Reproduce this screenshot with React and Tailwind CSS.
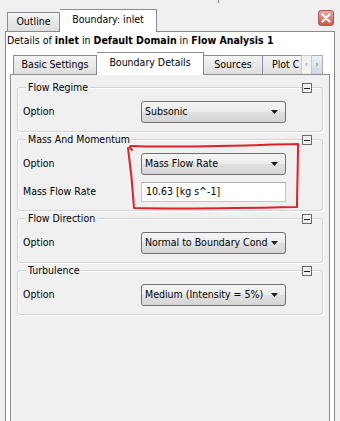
import React from 'react';

function Combo({ value }) {
  return (
    <div className="flex items-center h-[22px] w-[145px] rounded-[3px] border border-[#707070] bg-[linear-gradient(to_bottom,#f4f4f4_0%,#ececec_50%,#e0e0e0_50%,#d6d6d6_100%)] pl-[3px] pr-[7px]">
      <span className="flex-1 whitespace-nowrap overflow-hidden">{value}</span>
      <svg width="7" height="4" viewBox="0 0 7 4" className="ml-[3px] shrink-0">
        <path d="M0 0h7L3.5 4z" fill="#1a1a1a" />
      </svg>
    </div>
  );
}

function Group({ title, children, first }) {
  return (
    <div className={`relative ${first ? 'mt-[12px]' : 'mt-[7px]'} rounded-[3px] border border-[#d3d3d3] shadow-[inset_1px_1px_0_#ffffff,1px_1px_0_#ffffff] pt-[13px] pb-[8px] pl-[5px] flex flex-col gap-[7px]`}>
      <span className="absolute -top-[7px] left-[8px] px-[2px] bg-[#f0f0f0] leading-[12px]">{title}</span>
      <span className="absolute -top-[5px] right-[10px] w-[10px] h-[10px] bg-[#f0f0f0] border border-[#6a6a6a] flex items-center justify-center">
        <span className="block w-[6px] h-px bg-[#222]" />
      </span>
      {children}
    </div>
  );
}

function Row({ label, children }) {
  return (
    <div className="flex items-center">
      <span className="w-[118px] shrink-0">{label}</span>
      {children}
    </div>
  );
}

export default function App() {
  return (
    <div className="relative w-[340px] h-[421px] overflow-hidden bg-[#f0f0f0] text-[10.5px] text-black font-['DejaVu_Sans_Condensed','DejaVu_Sans',sans-serif] [font-stretch:condensed]">
      {/* top strip */}
      <div className="h-[8px] flex">
        <div className="w-[218px]" />
        <div className="w-px h-[3px] bg-[#8a8a8a]" />
      </div>

      {/* outer tabs */}
      <div className="flex items-end h-[23px] pl-[7px]">
        <div className="h-[19px] w-[53px] flex items-center justify-center border border-b-0 border-[#898c95] bg-[linear-gradient(to_bottom,#f4f4f4,#dedede)]">
          Outline
        </div>
        <div className="h-[23px] w-[97px] -mb-px flex items-center justify-center border border-b-0 border-l-0 border-[#898c95] bg-white z-10 pb-[3px]">
          Boundary: inlet
        </div>
        <div className="flex-1" />
        <div className="self-start mt-[2px] mr-[6px] w-[16px] h-[16px] rounded-[3px] border border-[#b0574f] bg-[linear-gradient(to_bottom,#eaa79f,#c85a50)] flex items-center justify-center">
          <svg width="10" height="10" viewBox="0 0 10 10">
            <path d="M1.5 1.5L8.5 8.5M8.5 1.5L1.5 8.5" stroke="#fff" strokeWidth="2.2" strokeLinecap="round" />
          </svg>
        </div>
      </div>

      {/* outer panel */}
      <div className="mx-[5px] h-[391px] border border-b-0 border-[#8a8a8a] bg-white flex flex-col">
        <div className="h-[14px] leading-[14px] pl-px mt-px whitespace-nowrap">
          Details of <b>inlet</b> in <b>Default Domain</b> in <b>Flow Analysis 1</b>
        </div>

        {/* inner tabs */}
        <div className="flex items-end h-[23px] mt-[4px] pl-[7px]">
          <div className="h-[19px] w-[84px] flex items-center justify-center border border-b-0 border-[#898c95] bg-[linear-gradient(to_bottom,#f4f4f4,#dedede)] whitespace-nowrap">
            Basic Settings
          </div>
          <div className="h-[23px] w-[107px] -mb-px z-10 flex items-center justify-center border border-b-0 border-l-0 border-[#898c95] bg-white pb-[3px] whitespace-nowrap">
            Boundary Details
          </div>
          <div className="h-[19px] w-[59px] flex items-center justify-center border border-b-0 border-l-0 border-[#898c95] bg-[linear-gradient(to_bottom,#f4f4f4,#dedede)] whitespace-nowrap">
            Sources
          </div>
          <div className="h-[19px] w-[38px] overflow-hidden flex items-center pl-[9px] border-t border-[#898c95] bg-[linear-gradient(to_bottom,#f4f4f4,#dedede)] whitespace-nowrap">
            Plot C
          </div>
          <div className="h-[19px] w-[11px] flex items-center justify-center bg-[#f2f2f2] border border-b-0 border-[#c9c9c9] text-[#888] text-[8px]">‹</div>
          <div className="h-[19px] w-[11px] flex items-center justify-center bg-[linear-gradient(to_bottom,#eef2f6,#cfd6de)] border border-b-0 border-l-0 border-[#a8b0b8] text-[#555] text-[8px]">›</div>
        </div>

        {/* content */}
        <div className="flex-1 mx-[4px] border border-b-0 border-[#8a8a8a] bg-[#f0f0f0] shadow-[inset_4px_0_4px_-2px_#f8f8f8] px-[6px]">
          <Group title="Flow Regime" first>
            <Row label="Option"><Combo value="Subsonic" /></Row>
          </Group>
          <Group title="Mass And Momentum">
            <Row label="Option"><Combo value="Mass Flow Rate" /></Row>
            <Row label="Mass Flow Rate">
              <div className="h-[20px] w-[145px] flex items-center pl-[4px] bg-white border border-[#c5c5c5] border-t-[#abadb3]">
                10.63 [kg s^-1]
              </div>
            </Row>
          </Group>
          <Group title="Flow Direction">
            <Row label="Option"><Combo value="Normal to Boundary Cond" /></Row>
          </Group>
          <Group title="Turbulence">
            <Row label="Option"><Combo value="Medium (Intensity = 5%)" /></Row>
          </Group>
        </div>
      </div>

      {/* red annotation loop */}
      <svg className="absolute left-0 top-0 pointer-events-none" width="340" height="421" viewBox="0 0 340 421">
        <path
          d="M132 150 C130 148 129 146 131 146 C175 148 250 145 298 144 C298 166 297 190 297 207 C250 208 182 209 134 208 C133 192 131 170 128 148"
          fill="none"
          stroke="#e0202a"
          strokeWidth="2"
          strokeLinejoin="round"
          strokeLinecap="round"
        />
      </svg>
    </div>
  );
}
